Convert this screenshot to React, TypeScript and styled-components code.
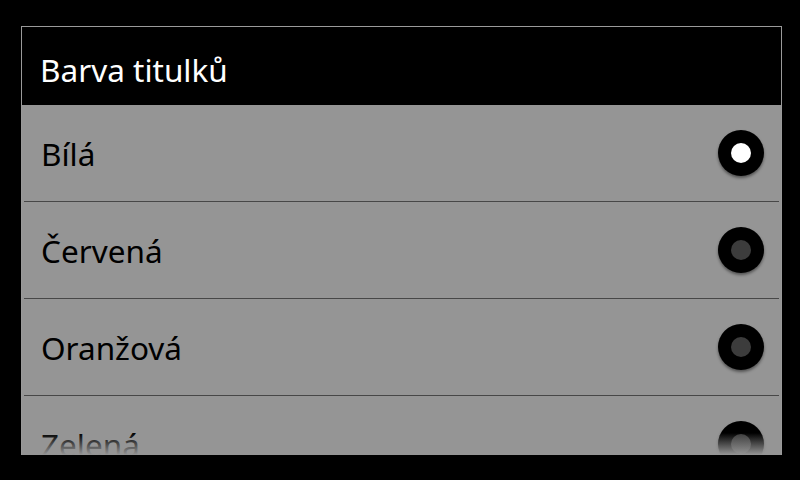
import React from "react";
import styled, { createGlobalStyle } from "styled-components";

const Global = createGlobalStyle`
  html, body { margin: 0; padding: 0; background: #000; }
  body { width: 800px; height: 480px; overflow: hidden; font-family: "Noto Sans", "Open Sans", sans-serif; }
`;

const Screen = styled.div`
  width: 800px;
  height: 480px;
  background: #000;
  padding: 26px 0 0 21px;
  box-sizing: border-box;
`;

const Dialog = styled.div`
  width: 761px;
  height: 429px;
  box-sizing: border-box;
  border: 1px solid #9a9a9a;
  border-bottom: none;
  display: flex;
  flex-direction: column;
  background: #000;
`;

const Header = styled.div`
  height: 78px;
  flex: none;
  display: flex;
  align-items: center;
  padding-left: 18px;
  padding-top: 7px;
  box-sizing: border-box;
  color: #fff;
  font-size: 31.5px;
`;

const List = styled.div`
  position: relative;
  flex: 1;
  overflow: hidden;
  background: #959595;
  padding: 0 2px 0 2px;
`;

const Row = styled.div`
  height: 96px;
  display: flex;
  align-items: center;
  justify-content: space-between;
  padding: 0 15px 0 17px;
  border-bottom: 1px solid #474747;
  box-sizing: content-box;
`;

const Label = styled.span`
  color: #000;
  font-size: 31.5px;
  padding-top: 1px;
`;

const Radio = styled.div<{ $checked?: boolean }>`
  width: 46px;
  height: 46px;
  border-radius: 50%;
  background: #000;
  box-shadow: 0 2px 3px rgba(0, 0, 0, 0.45);
  display: flex;
  align-items: center;
  justify-content: center;
  &::after {
    content: "";
    width: 20px;
    height: 20px;
    border-radius: 50%;
    background: ${(p) => (p.$checked ? "#fff" : "#3c3c3c")};
  }
`;

const Fade = styled.div`
  position: absolute;
  left: 0;
  right: 0;
  bottom: 0;
  height: 22px;
  background: linear-gradient(to bottom, rgba(149, 149, 149, 0), rgba(149, 149, 149, 0.6) 60%, #959595);
  pointer-events: none;
`;

const items = [
  { label: "Bílá", checked: true },
  { label: "Červená" },
  { label: "Oranžová" },
  { label: "Zelená" },
];

export default function App() {
  return (
    <Screen>
      <Global />
      <Dialog>
        <Header>Barva titulků</Header>
        <List>
          {items.map((it) => (
            <Row key={it.label}>
              <Label>{it.label}</Label>
              <Radio $checked={it.checked} />
            </Row>
          ))}
          <Fade />
        </List>
      </Dialog>
    </Screen>
  );
}
